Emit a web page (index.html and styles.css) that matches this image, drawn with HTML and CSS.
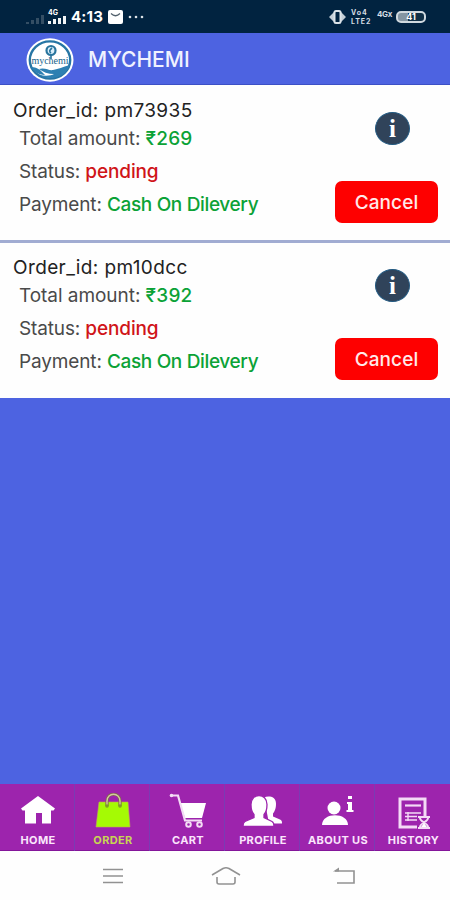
FILE: index.html
```html
<!DOCTYPE html>
<html lang="en">
<head>
    <meta charset="UTF-8">
    <meta name="viewport" content="width=device-width, initial-scale=1.0">
    <title>MYCHEMI</title>
    <link rel="stylesheet" href="styles.css">
</head>
<body>

    <div class="phone">
        <!-- Status bar -->
        <div class="status-bar">
            <div class="status-left">
                <svg class="signal-off" width="19" height="9" viewBox="0 0 19 9" fill="#344e64">
                    <path d="M0 7h3v2H0zM5 5h3v4H5zM10 3h3v6h-3zM15 0h3v9h-3z"/>
                </svg>
                <div class="signal">
                    <span>4G</span>
                    <svg width="19" height="8" viewBox="0 0 19 8" fill="#f2f5f7">
                        <path d="M0 5h3v3H0zM5 3h3v5H5zM10 2h3v6h-3zM15 0h3v8h-3z"/>
                    </svg>
                </div>
                <span class="time">4:13</span>
                <svg class="mail" width="15" height="14" viewBox="0 0 15 14">
                    <rect width="15" height="14" rx="2" fill="#fff"/>
                    <path d="M3 3.5Q7.5 8 12 3.5" fill="none" stroke="#52606c" stroke-width="1.2"/>
                </svg>
                <svg width="16" height="4" viewBox="0 0 16 4" fill="#dce2e7">
                    <circle cx="2" cy="2" r="1.3"/><circle cx="8" cy="2" r="1.3"/><circle cx="14" cy="2" r="1.3"/>
                </svg>
            </div>
            <div class="status-right">
                <svg width="17" height="14" viewBox="0 0 17 14">
                    <path d="M0 7l5-5v10zM17 7l-5-5v10z" fill="#c4ced6"/>
                    <rect x="5.5" y="1" width="6" height="12" rx="1.5" fill="#012340" stroke="#dce3e8" stroke-width="2"/>
                </svg>
                <div class="volte"><span>Vo4</span><span>LTE2</span></div>
                <span class="net">4Gx</span>
                <div class="battery"><span>41</span></div>
            </div>
        </div>

        <!-- Header -->
        <div class="header">
            <svg class="logo" width="48" height="44" viewBox="0 0 48 44">
                <ellipse cx="24" cy="22" rx="23.5" ry="21.7" fill="#fff"/>
                <ellipse cx="24" cy="22" rx="20.2" ry="18.6" fill="#fff" stroke="#2675a4" stroke-width="2.4"/>
                <path d="M13 31c6-2 10 2 14 1 6-1 9-3 17-5-3 8-10 13-19 13-5 0-9-1-12-3 6 1 12 1 15-1-6 0-11-2-15-5z" fill="#2d80b2"/>
                <path d="M5 29c4 0 6 1 9 3l5 5c-7 0-12-4-14-8z" fill="#2d80b2"/>
                <circle cx="25" cy="12.5" r="4.5" fill="#d9eefa" stroke="#28749d" stroke-width="2.2"/>
                <path d="M26 10q-4 3-1 5M25 17v4" fill="none" stroke="#28749d" stroke-width="1.6"/>
                <text class="logo-text" x="24" y="26" text-anchor="middle">mychemi</text>
            </svg>
            <h1>MYCHEMI</h1>
        </div>

        <!-- Orders -->
        <div class="orders">
            <div class="order">
                <div class="info">
                    <p class="order-id">Order_id: pm73935</p>
                    <p class="total">Total amount: <b class="green">₹269</b></p>
                    <p class="state">Status: <b class="red">pending</b></p>
                    <p class="payment">Payment: <b class="green">Cash On Dilevery</b></p>
                </div>
                <div class="actions">
                    <span class="info-icon">i</span>
                    <button class="cancel">Cancel</button>
                </div>
            </div>
            <div class="order">
                <div class="info">
                    <p class="order-id">Order_id: pm10dcc</p>
                    <p class="total">Total amount: <b class="green">₹392</b></p>
                    <p class="state">Status: <b class="red">pending</b></p>
                    <p class="payment">Payment: <b class="green">Cash On Dilevery</b></p>
                </div>
                <div class="actions">
                    <span class="info-icon">i</span>
                    <button class="cancel">Cancel</button>
                </div>
            </div>
        </div>

        <!-- Tabs -->
        <div class="tabs">
            <div class="tab">
                <svg width="40" height="36" viewBox="0 0 40 36" fill="#fff">
                    <path d="M20 3L37 15.500l-1.500 2H33v13h-9V20h-6v10.500H7v-13H4.500L3 15.500z"/>
                </svg>
                <span>HOME</span>
            </div>
            <div class="tab active">
                <svg width="40" height="36" viewBox="0 0 40 36">
                    <path d="M6 9h29l2 25H3z" fill="#a5fa04" stroke="#c3a55c" stroke-width="0.600"/>
                    <path d="M14 13V8c0-9 13-9 13 0v5" fill="none" stroke="#81664f" stroke-width="3.200"/>
                    <path d="M14 12V8c0-9 13-9 13 0v4" fill="none" stroke="#d3c9a0" stroke-width="1.400"/>
                    <circle cx="14" cy="13" r="1.800" fill="#7f9c28"/><circle cx="27" cy="13" r="1.800" fill="#7f9c28"/>
                </svg>
                <span>ORDER</span>
            </div>
            <div class="tab">
                <svg width="40" height="36" viewBox="0 0 40 36">
                    <path d="M12 10h26l-4 15H17z" fill="#fff"/>
                    <path d="M3 2.500h7l7 25h17" fill="none" stroke="#f3dcf5" stroke-width="2.200"/>
                    <circle cx="3.500" cy="2.500" r="1.800" fill="#f3dcf5"/>
                    <circle cx="20.500" cy="31.500" r="2.300" fill="none" stroke="#f3dcf5" stroke-width="2"/>
                    <circle cx="31.500" cy="31.500" r="2.300" fill="none" stroke="#f3dcf5" stroke-width="2"/>
                </svg>
                <span>CART</span>
            </div>
            <div class="tab">
                <svg width="40" height="36" viewBox="0 0 40 36" fill="#fff">
                    <path d="M21 4.500c4-2 12-1.500 12 6 0 5-1 7-3 10v3l7 3c2 1 2 2 2 4H26z"/>
                    <path d="M8 11.500c0-12 16-12 16 0 0 6-1 8-3 10v3l8 4c2 1 2 3 2 5H0c0-2 0-4 2-5l9-4v-3c-2-2-3-4-3-10z" stroke="#9d24ad" stroke-width="1.300"/>
                </svg>
                <span>PROFILE</span>
            </div>
            <div class="tab">
                <svg width="40" height="36" viewBox="0 0 40 36" fill="#fff">
                    <circle cx="16" cy="15" r="6.500"/>
                    <path d="M4 32c0-13 26-13 26 0z"/>
                    <path d="M30 3h4v3h-4zM29 9h5v8h1.500v2h-7v-2H30v-6h-1z"/>
                </svg>
                <span>ABOUT US</span>
            </div>
            <div class="tab">
                <svg width="40" height="36" viewBox="0 0 40 36" fill="none" stroke="#f4daf6">
                    <path d="M31 23V6H6v28h17" stroke-width="3"/>
                    <path d="M11 12.500h16" stroke-width="2.200"/>
                    <path d="M11 20h16M11 23.500h12M11 27h12M14 19v9" stroke-width="1.400"/>
                    <path d="M24 24h12M24 35h12M26 25c0 4 8 5 8 9M34 25c0 4-8 5-8 9" stroke-width="2"/>
                    <path d="M27 34l3-4 3 4z" fill="#fff" stroke="none"/>
                </svg>
                <span>HISTORY</span>
            </div>
        </div>

        <!-- System buttons -->
        <div class="system-nav">
            <svg width="22" height="18" viewBox="0 0 22 18" fill="none" stroke="#929292" stroke-width="1.600">
                <path d="M1 2.500h20M1 9h20M1 15.500h20"/>
            </svg>
            <svg class="home-button" width="30" height="20" viewBox="0 0 30 20" fill="none" stroke="#929292" stroke-width="1.600">
                <path d="M1 9L12 2.500q3-1.500 6 0L29 9M6 11v5q0 2 2 2h14q2 0 2-2v-5"/>
            </svg>
            <svg width="22" height="18" viewBox="0 0 22 18" fill="none" stroke="#929292" stroke-width="1.600">
                <path d="M2 4h19v12H4"/>
                <path d="M0 4.500l6-4v4z" fill="#929292" stroke="none"/>
            </svg>
        </div>
    </div>

</body>
</html>
```
FILE: styles.css
```css
* {
    box-sizing: border-box;
}

body {
    font-family: Inter, "Liberation Sans", sans-serif;
    margin: 0;
    background-color: #4d63e1;
}

svg {
    display: block;
}

.phone {
    display: flex;
    flex-direction: column;
    height: 900px;
}

/* Status bar */
.status-bar {
    display: flex;
    justify-content: space-between;
    height: 33px;
    padding: 0 24px 0 26px;
    background-color: #012340;
    color: #fff;
}

.status-left,
.status-right {
    display: flex;
    align-items: center;
}

.signal-off {
    margin: 5px 3px 0 0;
}

.signal {
    width: 20px;
    margin-right: 3px;
}

.signal span {
    display: block;
    font-size: 7px;
    line-height: 6px;
    font-weight: bold;
}

.time {
    width: 33px;
    margin-right: 4px;
    font-size: 15px;
    font-weight: bold;
    letter-spacing: 0.2px;
}

.mail {
    margin-right: 5px;
}

.volte {
    width: 23px;
    margin: 0 3px 0 5px;
    font-size: 7px;
    line-height: 9px;
    font-weight: bold;
    letter-spacing: 0.9px;
    color: #d5dde3;
}

.volte span {
    display: block;
}

.net {
    width: 15px;
    margin: -5px 4px 0 0;
    font-size: 8px;
    font-weight: bold;
    letter-spacing: -0.3px;
    color: #d5dde3;
}

.battery {
    width: 30px;
    height: 12px;
    border: 2px solid #d0d9df;
    border-radius: 5px;
    background: linear-gradient(to right, #8495a2 40%, #102f46 40%);
    font-size: 9px;
    line-height: 8px;
    font-weight: bold;
    text-align: center;
}

/* Header */
.header {
    display: flex;
    align-items: center;
    height: 52px;
    padding: 2px 0 0 26px;
    border-bottom: 1px solid #3c50c5;
    background-color: #4d63e1;
}

.header h1 {
    margin: 0 0 0 14px;
    font-size: 21px;
    font-weight: 500;
    color: #f0f2ff;
}

.logo-text {
    font-family: "Liberation Serif", serif;
    font-size: 10px;
    fill: #20658b;
}

/* Orders */
.orders {
    flex: 1;
}

.order {
    display: flex;
    justify-content: space-between;
    height: 155px;
    padding: 13px 12px 0 13px;
    background-color: #fefefe;
}

.order + .order {
    height: 158px;
    padding-top: 12px;
    border-top: 3px solid #a1acd2;
}

.info p {
    margin: 0 0 0 6px;
    font-size: 19px;
    line-height: 33px;
    letter-spacing: -0.14px;
    color: #4a4a4a;
    white-space: nowrap;
}

.info .order-id {
    margin-left: 0;
    line-height: 26px;
    letter-spacing: 0.38px;
    color: #222;
}

.info .total {
    margin-bottom: 2px;
    line-height: 29px;
    letter-spacing: -0.05px;
}

.info b {
    font-weight: 500;
}

.info .total b {
    letter-spacing: 0.2px;
}

.info .payment b {
    letter-spacing: -0.35px;
}

.info .green {
    color: #0ba236;
}

.info .red {
    color: #d01418;
}

.actions {
    display: flex;
    flex-direction: column;
    align-items: flex-end;
}

.info-icon {
    width: 35px;
    height: 33px;
    margin: 14px 28px 36px 0;
    border: 1px solid #235a82;
    border-radius: 50%;
    background-color: #30435a;
    font-family: "Liberation Serif", serif;
    font-size: 25px;
    line-height: 31px;
    font-weight: bold;
    text-align: center;
    color: #fff;
}

.cancel {
    width: 103px;
    height: 42px;
    padding: 0;
    border: none;
    border-radius: 7px;
    background-color: #fe0000;
    font-family: inherit;
    font-size: 19px;
    font-weight: 500;
    letter-spacing: 0.1px;
    color: #ffeaea;
}

/* Tabs */
.tabs {
    display: grid;
    grid-template-columns: repeat(6, 1fr);
    height: 67px;
    border-bottom: 1px solid #84159a;
    background-color: #9d24ad;
}

.tab {
    display: flex;
    flex-direction: column;
    align-items: center;
    padding: 9px 0 0 2px;
    border-right: 1px solid #7a3cb4;
    font-size: 11px;
    line-height: 22px;
    font-weight: bold;
    letter-spacing: 0.35px;
    color: #fbe6fc;
    white-space: nowrap;
}

.tab:last-child {
    border-right: none;
}

.active {
    color: #c8d553;
}

/* System buttons */
.system-nav {
    display: flex;
    justify-content: space-between;
    align-items: center;
    height: 49px;
    padding: 0 95px 0 102px;
    background-color: #fefefe;
}

.home-button {
    margin-right: 6px;
}
```
